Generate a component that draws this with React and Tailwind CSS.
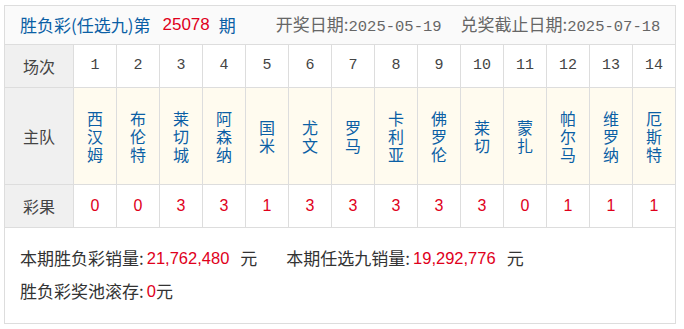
import React from 'react';

const cjk = '"Noto Sans CJK SC", "Liberation Sans", sans-serif';
const sans = '"Liberation Sans", sans-serif';
const mono = '"Liberation Mono", monospace';

const matches = [
  { no: 1, team: '西汉姆', result: 0 },
  { no: 2, team: '布伦特', result: 0 },
  { no: 3, team: '莱切城', result: 3 },
  { no: 4, team: '阿森纳', result: 3 },
  { no: 5, team: '国米', result: 1 },
  { no: 6, team: '尤文', result: 3 },
  { no: 7, team: '罗马', result: 3 },
  { no: 8, team: '卡利亚', result: 3 },
  { no: 9, team: '佛罗伦', result: 3 },
  { no: 10, team: '莱切', result: 3 },
  { no: 11, team: '蒙扎', result: 0 },
  { no: 12, team: '帕尔马', result: 1 },
  { no: 13, team: '维罗纳', result: 1 },
  { no: 14, team: '厄斯特', result: 1 },
];

const Label = ({ children, h }) => (
  <div className={`flex items-center justify-center bg-[#f0f0f0] text-[16px] text-[#444] ${h}`}>
    {children}
  </div>
);

export default function App() {
  return (
    <div className="bg-white w-[684px] h-[329px] pt-[5px] pl-[4px]" style={{ fontFamily: cjk }}>
      <div className="w-[672px] border border-[#ddd]">
        {/* header */}
        <div className="h-[39px] flex items-center bg-[#fafafa] border-b border-[#ddd] pl-[15px] text-[17px]">
          <span className="text-[#0b5fa5]">胜负彩(任选九)第</span>
          <span className="text-[#e0001b] text-[17px] ml-[12px] mr-[9px]" style={{ fontFamily: sans }}>25078</span>
          <span className="text-[#0b5fa5]">期</span>
          <span className="text-[#666] ml-[40px]">
            开奖日期:<span className="text-[15.5px]" style={{ fontFamily: mono }}>2025-05-19</span>
          </span>
          <span className="text-[#666] ml-[19px]">
            兑奖截止日期:<span className="text-[15.5px]" style={{ fontFamily: mono }}>2025-07-18</span>
          </span>
        </div>

        {/* table */}
        <div className="grid grid-cols-[68px_repeat(14,42px)] gap-px bg-[#ddd] border-b border-[#ddd]">
          <Label h="h-[42px]">场次</Label>
          {matches.map((m) => (
            <div
              key={'n' + m.no}
              className="h-[42px] flex items-center justify-center bg-white text-[15px] text-[#444]"
              style={{ fontFamily: mono }}
            >
              {m.no}
            </div>
          ))}

          <Label h="h-[96px]">主队</Label>
          {matches.map((m) => (
            <div key={'t' + m.no} className="h-[96px] flex flex-col items-center justify-center bg-[#fffbef] text-[16px] leading-[18px] text-[#0b5fa5]">
              {m.team.split('').map((c, i) => (
                <span key={i}>{c}</span>
              ))}
            </div>
          ))}

          <Label h="h-[42px]">彩果</Label>
          {matches.map((m) => (
            <div
              key={'r' + m.no}
              className="h-[42px] flex items-center justify-center bg-white text-[16px] text-[#e0001b]"
              style={{ fontFamily: sans }}
            >
              {m.result}
            </div>
          ))}
        </div>

        {/* footer */}
        <div className="h-[95px] pl-[15px] pt-[18px] text-[17px] text-[#333]">
          <div className="flex items-center h-[24px]">
            <span>本期胜负彩销量:</span>
            <span className="text-[#e0001b] text-[16.5px] pl-[3px]" style={{ fontFamily: sans }}>21,762,480</span>
            <span className="ml-[11px]">元</span>
            <span className="ml-[29px]">本期任选九销量:</span>
            <span className="text-[#e0001b] text-[16.5px] pl-[3px]" style={{ fontFamily: sans }}>19,292,776</span>
            <span className="ml-[11px]">元</span>
          </div>
          <div className="flex items-center h-[24px] mt-[9px]">
            <span>胜负彩奖池滚存:</span>
            <span className="text-[#e0001b] text-[16.5px] pl-[3px]" style={{ fontFamily: sans }}>0</span>
            <span>元</span>
          </div>
        </div>
      </div>
    </div>
  );
}
